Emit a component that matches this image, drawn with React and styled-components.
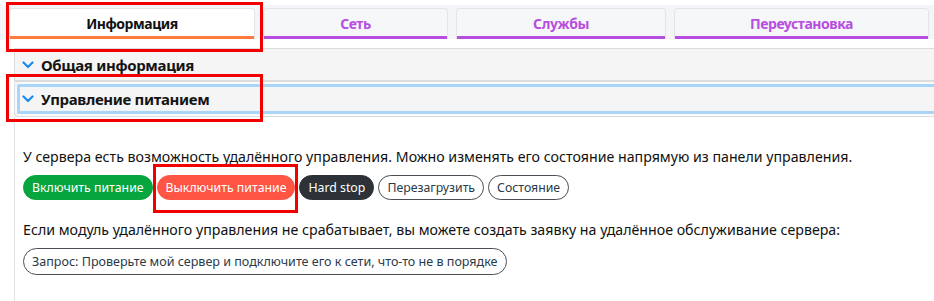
import React from "react";
import styled, { createGlobalStyle } from "styled-components";

const GlobalStyle = createGlobalStyle`
    html, body {
        margin: 0;
        padding: 0;
        background: #fff;
        overflow: hidden;
    }
    body {
        font-family: "Noto Sans", "Open Sans", sans-serif;
        color: #111;
    }
`;

const Page = styled.div`
    position: relative;
    width: 934px;
    height: 301px;
    overflow: hidden;
`;

const TabBar = styled.div`
    display: flex;
    gap: 8px;
    margin-top: 5px;
    padding: 3px 5px 0 9px;
    background: #f4f5f8;
`;

const Tab = styled.div`
    flex: 0 0 ${(p) => p.$w}px;
    height: 31px;
    display: flex;
    align-items: center;
    justify-content: center;
    box-sizing: border-box;
    border: 1px solid #e3e5ea;
    border-bottom: 0;
    border-radius: 4px 4px 0 0;
    background: ${(p) => (p.$active ? "#fff" : "#f6f7f9")};
    box-shadow: inset 0 -3px 0 ${(p) => (p.$active ? "#ff7a3d" : "#b64fe0")};
    font-size: 14px;
    letter-spacing: -0.45px;
    font-weight: 700;
    color: ${(p) => (p.$active ? "#111" : "#b64fe0")};
    padding-bottom: 2px;
`;

const Accordion = styled.div`
    margin: 9px -10px 0 14px;
`;

const Header = styled.div`
    height: ${(p) => (p.$last ? 35 : 34)}px;
    display: flex;
    align-items: center;
    gap: 7px;
    padding-left: 7px;
    box-sizing: border-box;
    background: #f5f5f5;
    border: 1px solid #dcdcdc;
    border-bottom-width: ${(p) => (p.$last ? 1 : 2)}px;
    border-top-width: ${(p) => (p.$last ? 0 : 1)}px;
    border-radius: ${(p) => (p.$focus ? "4px" : "0")};
    box-shadow: ${(p) =>
        p.$focus ? "inset 0 0 0 2px #fafafa, inset 0 0 0 5px #a9d5f9" : "none"};
    font-size: 15px;
    letter-spacing: -0.35px;
    font-weight: 700;
    color: #141414;
`;

const Chevron = () => (
    <svg width="12" height="8" viewBox="0 0 12 8">
        <path d="M1.5 1.5 L6 6 L10.5 1.5" fill="none" stroke="#1a8cf0" strokeWidth="2.2" strokeLinecap="round" strokeLinejoin="round"/>
    </svg>
);

const Body = styled.div`
    border-left: 1px solid #e2e2e2;
    padding: 30px 0 40px 8px;
    font-size: 14.2px;
`;

const Text = styled.p`
    margin: 0;
    line-height: 20px;
`;

const Buttons = styled.div`
    display: flex;
    gap: 4px;
    margin: 8px 0 20px;
`;

const variants = {
    on: "background:#06a53d;color:#fff;border-color:#06a53d;",
    off: "background:#ff5545;color:#fff;border-color:#ff5545;",
    dark: "background:#2c3238;color:#fff;border-color:#2c3238;",
    line: "background:#fff;color:#2a3a48;border-color:#4a4f55;",
};

const Pill = styled.button`
    height: 25px;
    padding: 0 8px;
    border: 1px solid;
    border-radius: 13px;
    font-family: "Noto Sans", "Open Sans", sans-serif;
    font-size: 12.3px;
    white-space: nowrap;
    cursor: pointer;
    ${(p) => variants[p.$v]}
`;

const RequestPill = styled(Pill)`
    height: 27px;
    border-radius: 14px;
    margin-top: 8px;
    padding: 0 8px;
    font-size: 12.55px;
`;

const Mark = styled.div`
    position: absolute;
    border: 3px solid #f20000;
    box-sizing: border-box;
    pointer-events: none;
`;

const marks = [
    {left: 6, top: 2, width: 257, height: 50},
    {left: 6, top: 74, width: 257, height: 48},
    {left: 153, top: 164, width: 145, height: 49},
];

export default function App() {
    return (
        <Page>
            <GlobalStyle/>
            <TabBar>
                <Tab $active $w={246}>Информация</Tab>
                <Tab $w={185}>Сеть</Tab>
                <Tab $w={210}>Службы</Tab>
                <Tab $w={255}>Переустановка</Tab>
            </TabBar>
            <Accordion>
                <Header>
                    <Chevron/>
                    Общая информация
                </Header>
                <Header $last $focus>
                    <Chevron/>
                    Управление питанием
                </Header>
                <Body>
                    <Text>
                        У сервера есть возможность удалённого управления. Можно изменять его состояние напрямую из панели управления.
                    </Text>
                    <Buttons>
                        <Pill $v="on">Включить питание</Pill>
                        <Pill $v="off">Выключить питание</Pill>
                        <Pill $v="dark">Hard stop</Pill>
                        <Pill $v="line">Перезагрузить</Pill>
                        <Pill $v="line">Состояние</Pill>
                    </Buttons>
                    <Text>
                        Если модуль удалённого управления не срабатывает, вы можете создать заявку на удалённое обслуживание сервера:
                    </Text>
                    <RequestPill $v="line">
                        Запрос: Проверьте мой сервер и подключите его к сети, что-то не в порядке
                    </RequestPill>
                </Body>
            </Accordion>
            {marks.map((m, i) => (
                <Mark key={i} style={m}/>
            ))}
        </Page>
    );
}
